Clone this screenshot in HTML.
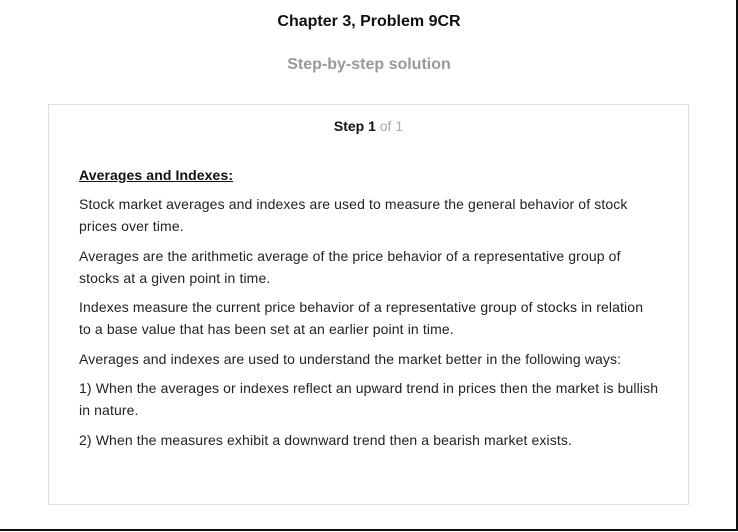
<!DOCTYPE html>
<html><head><style>
html,body{margin:0;padding:0;background:#fff;}
body{width:738px;height:532px;position:relative;overflow:hidden;font-family:"Liberation Sans",Arial,sans-serif;color:#222;}
.frame{position:absolute;left:0;top:0;width:736px;height:529px;border-right:2px solid #111;border-bottom:2px solid #111;}
.t1{position:absolute;top:13px;left:0;width:738px;text-align:center;font-weight:bold;font-size:16px;color:#111;}
.t2{position:absolute;top:56px;left:0;width:738px;text-align:center;font-weight:bold;font-size:16px;color:#999;}
.box{position:absolute;left:48px;top:104px;width:639px;height:399px;border:1px solid #ddd;}
.step{position:absolute;top:13px;left:0;width:639px;text-align:center;font-size:14px;line-height:16px;}
.step b{color:#111}.step span{color:#aaa}
.h{position:absolute;left:30px;top:62px;font-size:14px;font-weight:bold;text-decoration:underline;line-height:16px;color:#111;letter-spacing:0.1px;}
.c{position:absolute;left:30px;top:88px;width:582px;font-size:14px;line-height:22.3px;letter-spacing:0.12px;}
.c p{margin:0 0 7px 0;}
</style></head><body>
<div class="frame"></div>
<div class="t1">Chapter 3, Problem 9CR</div>
<div class="t2">Step-by-step solution</div>
<div class="box">
<div class="step"><b>Step 1</b> <span>of 1</span></div>
<div class="h">Averages and Indexes:</div>
<div class="c">
<p>Stock market averages and indexes are used to measure the general behavior of stock<br>prices over time.</p>
<p>Averages are the arithmetic average of the price behavior of a representative group of<br>stocks at a given point in time.</p>
<p>Indexes measure the current price behavior of a representative group of stocks in relation<br>to a base value that has been set at an earlier point in time.</p>
<p>Averages and indexes are used to understand the market better in the following ways:</p>
<p>1) When the averages or indexes reflect an upward trend in prices then the market is bullish<br>in nature.</p>
<p>2) When the measures exhibit a downward trend then a bearish market exists.</p>
</div>
</div>
</body></html>
